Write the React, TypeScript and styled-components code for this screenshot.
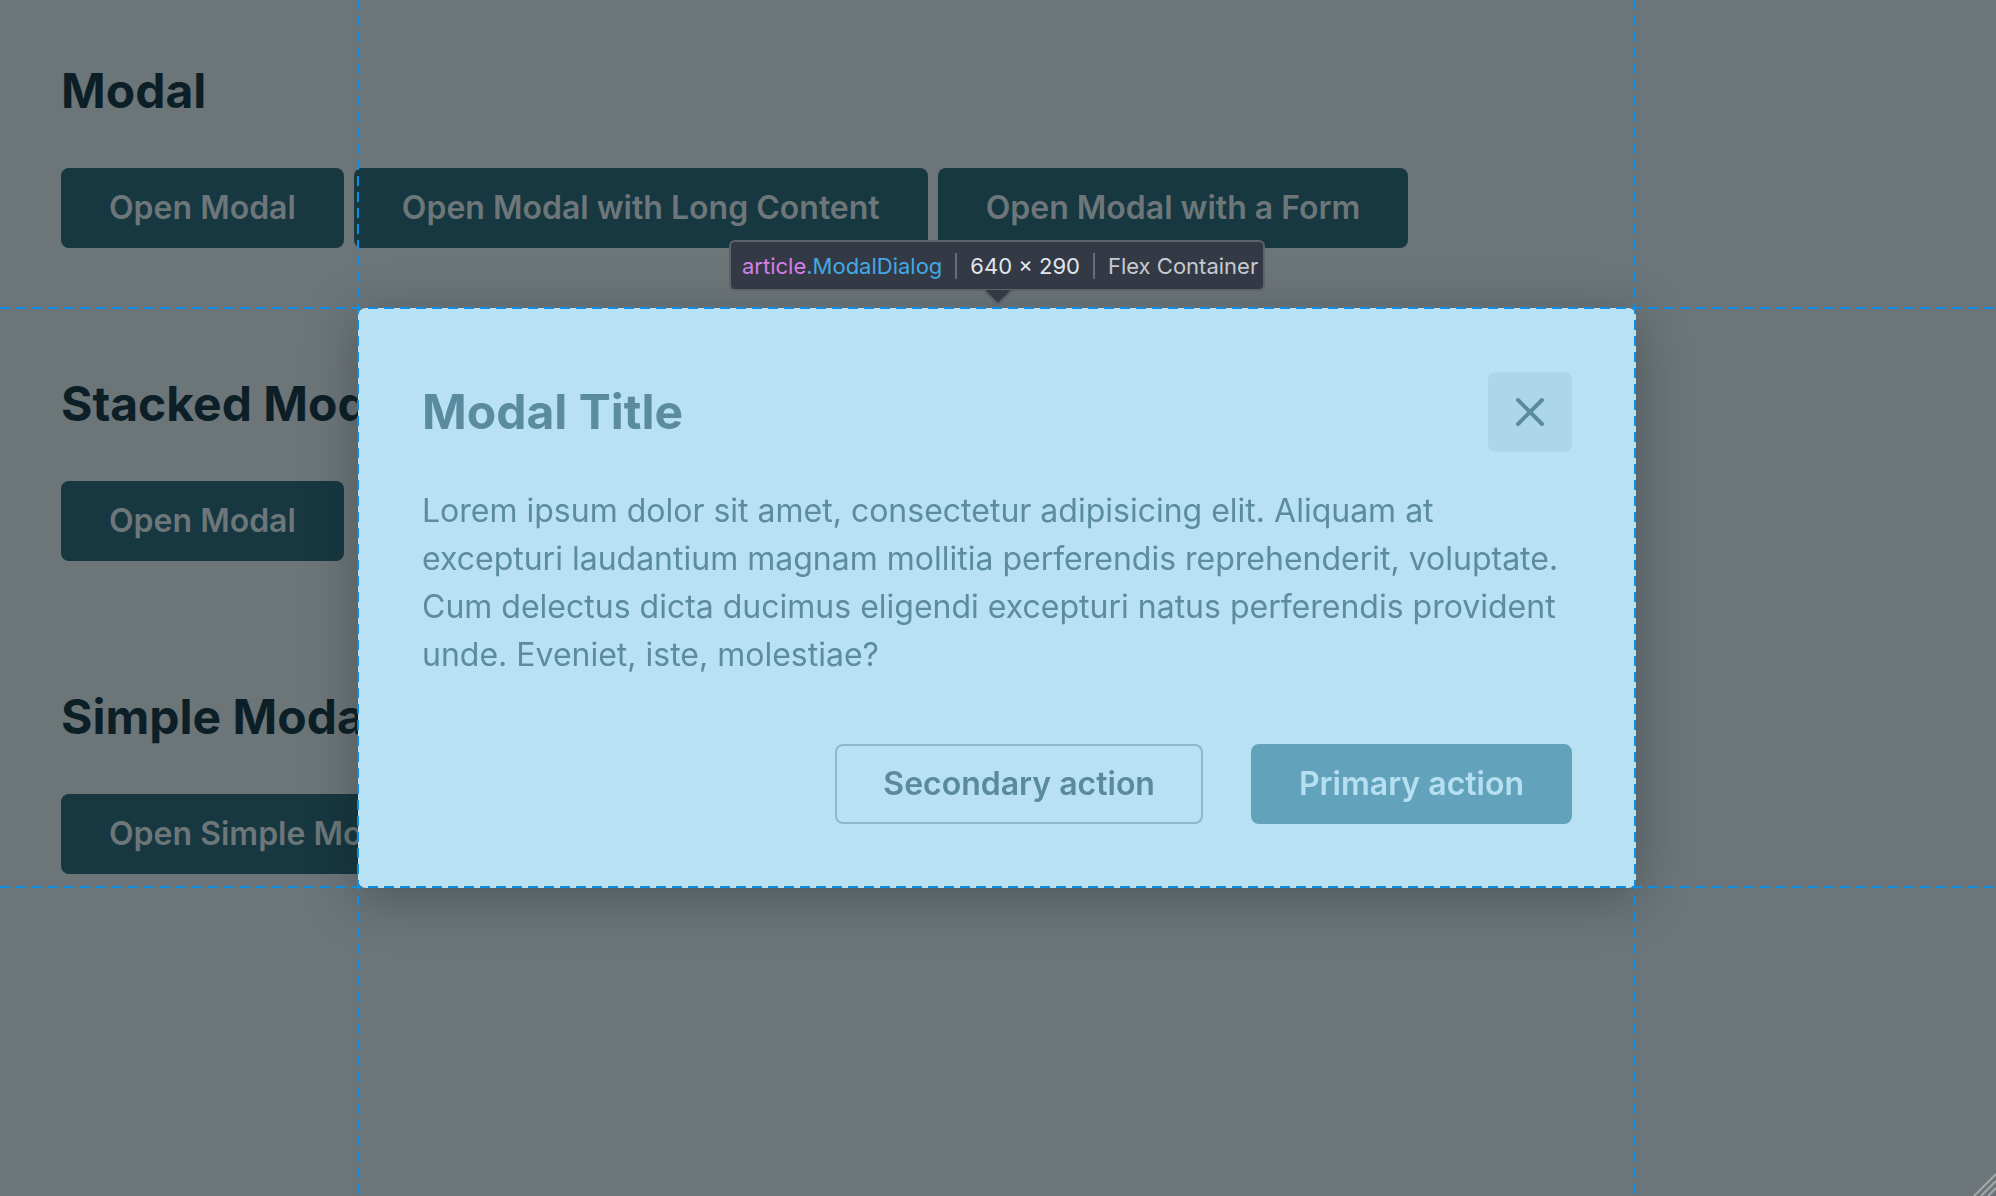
import React from 'react';
import styled, { createGlobalStyle } from 'styled-components';
import { X } from 'lucide-react';

const GlobalStyle = createGlobalStyle`
  html, body {
    margin: 0;
    padding: 0;
    height: 100%;
    overflow: hidden;
    font-family: "Inter", "Noto Sans", sans-serif;
  }
  * { box-sizing: border-box; }
`;

const Page = styled.main`
  min-height: 100vh;
  background: #6c7578;
  padding: 62px 61px;
  display: flex;
  flex-direction: column;
  gap: 127px;
`;

const Section = styled.section`
  display: flex;
  flex-direction: column;
  gap: 48px;
`;

const Heading = styled.h2`
  margin: 0;
  font-size: 48px;
  line-height: 58px;
  font-weight: 700;
  color: #0c1f27;
  white-space: nowrap;
`;

const ButtonRow = styled.div`
  display: flex;
  gap: 10px;
`;

const OpenButton = styled.button`
  font-family: inherit;
  font-size: 32px;
  line-height: 48px;
  font-weight: 600;
  padding: 16px 48px;
  border: 0;
  border-radius: 8px;
  background: #173741;
  color: #6d777a;
  white-space: nowrap;
  cursor: pointer;
`;

const Backdrop = styled.div`
  position: fixed;
  inset: 0;
  padding-right: 2px;
  display: flex;
  align-items: center;
  justify-content: center;
`;

const ModalDialog = styled.article`
  width: 1278px;
  height: 580px;
  padding: 64px;
  background: #b8e1f3;
  border-radius: 8px;
  box-shadow: 0 10px 50px rgba(20, 28, 31, 0.35);
  display: flex;
  flex-direction: column;
`;

const ModalHeader = styled.header`
  display: flex;
  align-items: center;
  justify-content: space-between;
`;

const ModalTitle = styled.h3`
  margin: 0;
  font-size: 48px;
  line-height: 58px;
  font-weight: 700;
  color: #5a8b9f;
`;

const CloseButton = styled.button`
  display: flex;
  align-items: center;
  justify-content: center;
  width: 84px;
  height: 80px;
  border: 0;
  border-radius: 8px;
  background: #acd7e9;
  color: #5a8b9e;
  padding: 0;
  cursor: pointer;
`;

const ModalBody = styled.p`
  margin: 35px 0 0;
  font-size: 32px;
  line-height: 48px;
  color: #5b8c9f;
`;

const ModalFooter = styled.footer`
  margin-top: auto;
  display: flex;
  justify-content: flex-end;
  gap: 48px;
`;

const ActionButton = styled.button<{ $primary?: boolean }>`
  font-family: inherit;
  font-size: 32px;
  line-height: 48px;
  font-weight: 600;
  padding: 14px 46px;
  border-radius: 8px;
  border: 2px solid ${(p) => (p.$primary ? '#62a2bb' : '#8db7ca')};
  background: ${(p) => (p.$primary ? '#62a2bb' : 'transparent')};
  color: ${(p) => (p.$primary ? '#b6e0f1' : '#5a8a9d')};
  white-space: nowrap;
  cursor: pointer;
`;

/* devtools inspect overlay */
const GuideV = styled.div<{ $x: number }>`
  position: fixed;
  top: 0;
  bottom: 0;
  left: ${(p) => p.$x}px;
  width: 2px;
  background: repeating-linear-gradient(to bottom, #0f8de0 0 10px, transparent 10px 16px);
  pointer-events: none;
`;

const GuideH = styled.div<{ $y: number }>`
  position: fixed;
  left: 0;
  right: 0;
  top: ${(p) => p.$y}px;
  height: 2px;
  background: repeating-linear-gradient(to right, #0f8de0 0 10px, transparent 10px 16px);
  pointer-events: none;
`;

const Tooltip = styled.div`
  position: fixed;
  left: 729px;
  top: 240px;
  width: 536px;
  height: 51px;
  display: flex;
  align-items: center;
  gap: 13px;
  padding: 0 11px;
  background: #343a45;
  border: 2px solid #5d6369;
  border-radius: 6px;
  font-size: 22px;
  white-space: nowrap;

  &::after {
    content: "";
    position: absolute;
    left: 50%;
    bottom: -12px;
    width: 20px;
    height: 20px;
    margin-left: -10px;
    background: #343a45;
    border-right: 2px solid #5d6369;
    border-bottom: 2px solid #5d6369;
    transform: rotate(45deg);
    clip-path: polygon(100% 0, 100% 100%, 0 100%);
  }
`;

const Sep = styled.span`
  flex: none;
  width: 2px;
  height: 26px;
  background: #666c73;
`;

const Tag = styled.span`
  color: #d67ee8;
`;

const Cls = styled.span`
  color: #43a9e2;
`;

const Dim = styled.span<{ $muted?: boolean }>`
  color: ${(p) => (p.$muted ? '#c6cacf' : '#e2e6eb')};
`;

const Grip = styled.svg`
  position: fixed;
  right: 0;
  bottom: 0;
`;

export default function App() {
  return (
    <>
      <GlobalStyle />
      <Page>
        <Section>
          <Heading>Modal</Heading>
          <ButtonRow>
            <OpenButton>Open Modal</OpenButton>
            <OpenButton>Open Modal with Long Content</OpenButton>
            <OpenButton>Open Modal with a Form</OpenButton>
          </ButtonRow>
        </Section>
        <Section>
          <Heading>Stacked Modal</Heading>
          <ButtonRow>
            <OpenButton>Open Modal</OpenButton>
          </ButtonRow>
        </Section>
        <Section>
          <Heading>Simple Modal</Heading>
          <ButtonRow>
            <OpenButton>Open Simple Modal</OpenButton>
          </ButtonRow>
        </Section>
      </Page>

      <Backdrop>
        <ModalDialog className="ModalDialog">
          <ModalHeader>
            <ModalTitle>Modal Title</ModalTitle>
            <CloseButton aria-label="Close">
              <X size={48} strokeWidth={2} />
            </CloseButton>
          </ModalHeader>
          <ModalBody>
            Lorem ipsum dolor sit amet, consectetur adipisicing elit. Aliquam at excepturi laudantium
            magnam mollitia perferendis reprehenderit, voluptate. Cum delectus dicta ducimus eligendi
            excepturi natus perferendis provident unde. Eveniet, iste, molestiae?
          </ModalBody>
          <ModalFooter>
            <ActionButton>Secondary action</ActionButton>
            <ActionButton $primary>Primary action</ActionButton>
          </ModalFooter>
        </ModalDialog>
      </Backdrop>

      <GuideV $x={357} />
      <GuideV $x={1634} />
      <GuideH $y={307} />
      <GuideH $y={886} />

      <Tooltip>
        <span>
          <Tag>article</Tag>
          <Cls>.ModalDialog</Cls>
        </span>
        <Sep />
        <Dim>640 × 290</Dim>
        <Sep />
        <Dim $muted>Flex Container</Dim>
      </Tooltip>

      <Grip width="28" height="28" viewBox="0 0 28 28">
        <g stroke="#a4a8aa" strokeWidth="2">
          <line x1="28" y1="6" x2="6" y2="28" />
          <line x1="28" y1="13" x2="13" y2="28" />
          <line x1="28" y1="20" x2="20" y2="28" />
        </g>
      </Grip>
    </>
  );
}
